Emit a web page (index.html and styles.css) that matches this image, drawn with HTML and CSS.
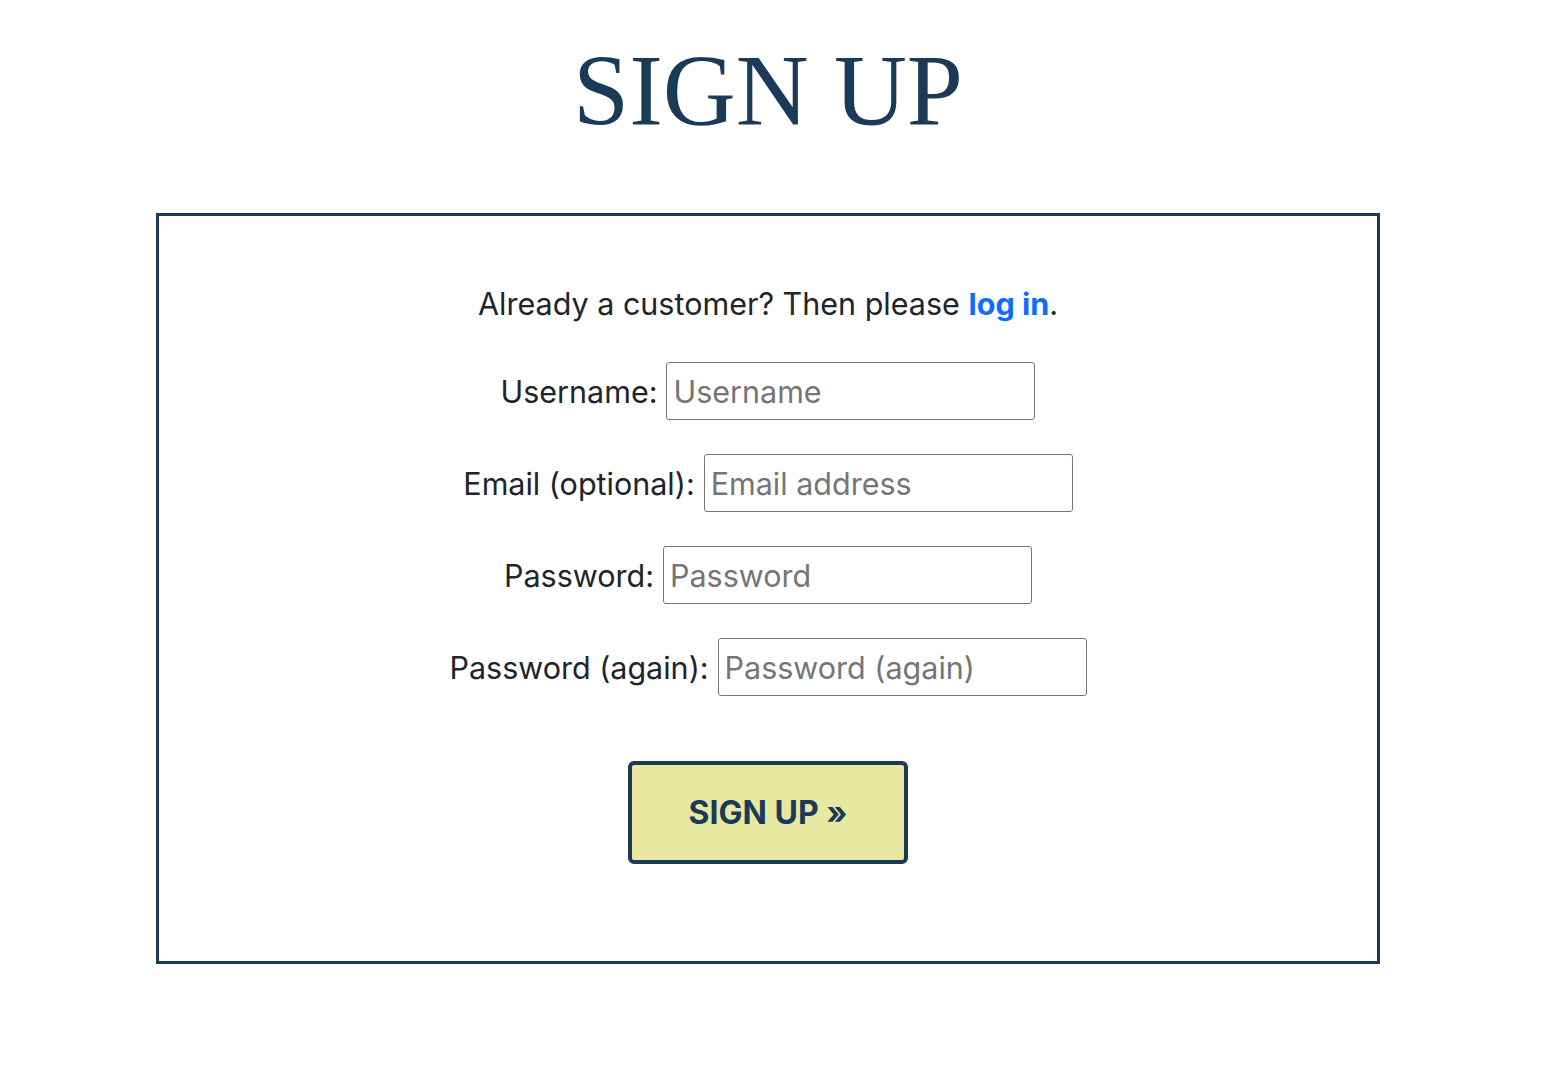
FILE: index.html
```html
<!DOCTYPE html>
<html>
<head>
<meta charset="utf-8">
<link rel="stylesheet" href="styles.css">
</head>
<body>
<div class="page">
  <h1 class="title">SIGN UP</h1>
  <div class="card">
    <p class="intro">Already a customer? Then please <a class="link" href="#">log in</a>.</p>
    <form class="form">
      <div class="row"><label class="label">Username:</label><input class="field" type="text" placeholder="Username"></div>
      <div class="row"><label class="label">Email (optional):</label><input class="field" type="text" placeholder="Email address"></div>
      <div class="row"><label class="label">Password:</label><input class="field" type="password" placeholder="Password"></div>
      <div class="row"><label class="label">Password (again):</label><input class="field" type="password" placeholder="Password (again)"></div>
      <button class="btn" type="button">SIGN UP &raquo;</button>
    </form>
  </div>
</div>
</body>
</html>
```
FILE: styles.css
```css
html, body { margin: 0; padding: 0; background: #fff; }
body { font-family: Inter, "Noto Sans", sans-serif; color: #212529; }
.page { width: 1536px; display: flex; flex-direction: column; align-items: center; }
.title {
  font-family: "Liberation Serif", "Times New Roman", serif;
  font-weight: 400;
  font-size: 101px;
  line-height: 1;
  color: #1b3a57;
  margin: 41px 0 0;
  letter-spacing: 0;
}
.card {
  box-sizing: border-box;
  width: 1224px;
  margin-top: 71px;
  border: 3px solid #1b3a57;
  padding: 70px 0 97px;
  display: flex;
  flex-direction: column;
  align-items: center;
}
.intro { margin: 0; font-size: 30.5px; line-height: 36px; }
.link { color: #0d6efd; font-weight: 700; text-decoration: none; }
.form { display: flex; flex-direction: column; align-items: center; margin-top: 40px; gap: 34px; }
.row { display: flex; align-items: center; gap: 9px; }
.label { font-size: 30.5px; }
.field {
  box-sizing: border-box;
  width: 369px;
  height: 58px;
  border: 1px solid #767676;
  border-radius: 3px;
  padding: 0 6px;
  font-family: Inter, "Noto Sans", sans-serif;
  font-size: 30.5px;
  color: #212529;
  margin: 0;
}
.field::placeholder { color: #757575; }
.btn {
  margin-top: 31px;
  box-sizing: border-box;
  width: 280px;
  height: 103px;
  background: #e9e8a0;
  border: 4px solid #1b3a57;
  border-radius: 6px;
  color: #1b3a57;
  font-family: Inter, "Noto Sans", sans-serif;
  font-weight: 700;
  font-size: 32px;
}
```
